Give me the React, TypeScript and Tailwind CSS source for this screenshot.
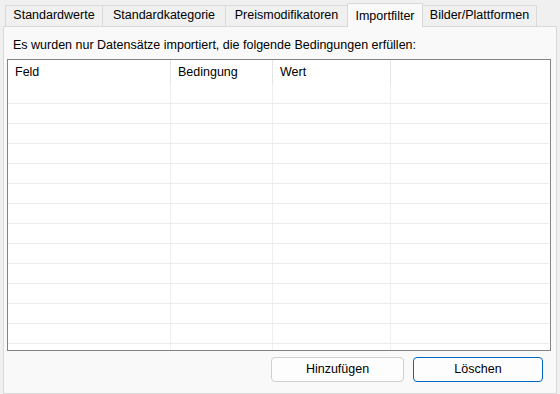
import React from "react";

const tabs = [
  { label: "Standardwerte", w: "w-[98px]" },
  { label: "Standardkategorie", w: "w-[124px]" },
  { label: "Preismodifikatoren", w: "w-[123px]" },
  { label: "Importfilter", w: "w-[76px]", active: true },
  { label: "Bilder/Plattformen", w: "w-[115px]" },
];

const cols = ["w-[163px]", "w-[102px]", "w-[118px]", "flex-1"];
const headers = ["Feld", "Bedingung", "Wert", ""];

export default function App() {
  const rows = Array.from({ length: 13 });
  return (
    <div
      className="w-[560px] h-[394px] bg-[#f0f0f0] overflow-hidden flex flex-col pt-[3px] px-[3px] text-[12.5px] text-black"
      style={{ fontFamily: '"Liberation Sans", Arial, sans-serif' }}
    >
      <div className="flex items-end h-[23px] pl-[2px] relative z-10">
        {tabs.map((t, i) =>
          t.active ? (
            <div
              key={i}
              className={`${t.w} h-[24px] -mb-px bg-[#f9f9f9] border border-b-0 border-[#d9d9d9] flex items-start justify-center pt-[3px] -ml-px whitespace-nowrap`}
            >
              {t.label}
            </div>
          ) : (
            <div
              key={i}
              className={`${t.w} h-[21px] bg-[#f0f0f0] border border-b-0 border-[#d9d9d9] flex items-center justify-center pb-[1px] whitespace-nowrap ${i === 0 ? "" : "-ml-px"}`}
            >
              {t.label}
            </div>
          )
        )}
      </div>
      <div className="flex-1 border border-[#d9d9d9] bg-[#f9f9f9] flex flex-col pl-[3px] pr-[5px]">
        <div className="h-[16px] leading-[16px] mt-[10px] pl-[6px] whitespace-nowrap">
          Es wurden nur Datensätze importiert, die folgende Bedingungen erfüllen:
        </div>
        <div className="mt-[6px] h-[292px] border border-[#838383] bg-white flex flex-col overflow-hidden">
          <div className="flex h-[24px] shrink-0">
            {headers.map((h, i) => (
              <div
                key={i}
                className={`${cols[i]} h-full flex items-center pl-[7px] ${i < 3 ? "border-r border-[#e5e5e5]" : ""}`}
              >
                {h}
              </div>
            ))}
          </div>
          {rows.map((_, r) => (
            <div key={r} className="flex h-[20px] shrink-0 border-b border-[#ebebeb] mr-[1px]">
              {cols.map((c, i) => (
                <div
                  key={i}
                  className={`${c} h-full ${i < 3 ? "border-r border-[#efefef]" : ""}`}
                />
              ))}
            </div>
          ))}
          <div className="flex flex-1">
            {cols.map((c, i) => (
              <div key={i} className={`${c} h-full ${i < 3 ? "border-r border-[#efefef]" : ""}`} />
            ))}
          </div>
        </div>
        <div className="flex justify-end gap-[9px] mt-[6px] pr-[8px]">
          <button className="w-[133px] h-[25px] rounded-[4px] border border-[#d0d0d0] bg-[#fdfdfd] flex items-center justify-center">
            Hinzufügen
          </button>
          <button className="w-[130px] h-[25px] rounded-[4px] border border-[#0067c0] bg-[#fdfdfd] flex items-center justify-center">
            Löschen
          </button>
        </div>
      </div>
    </div>
  );
}
